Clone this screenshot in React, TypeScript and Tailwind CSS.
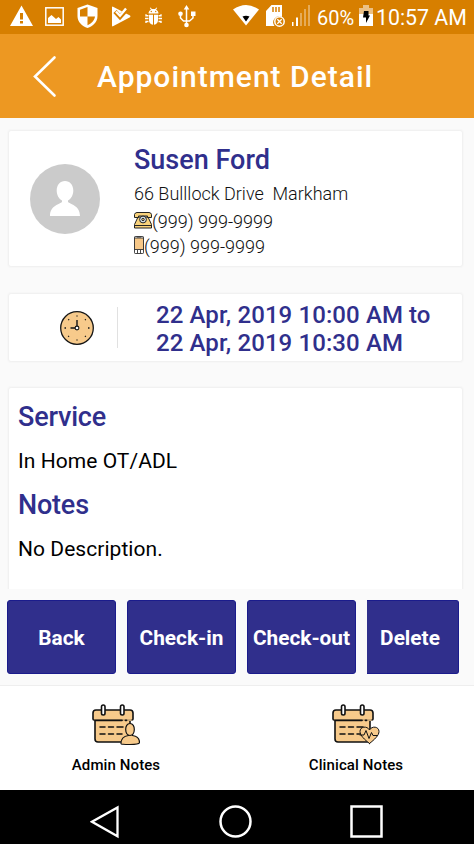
import React from "react";

function StatusBar() {
  return (
    <div className="flex h-[34px] shrink-0 items-center bg-[#d77f00] text-[20px] leading-[34px] text-white">
      <svg className="ml-[10px] shrink-0" width="23" height="34" viewBox="0 0 23 34">
        <path fill="#fff" fillRule="evenodd" d="M11.5 5.5 23 26H0ZM10 13v6.500h3v-6.500ZM10 21v2.500h3V21Z" />
      </svg>
      <svg className="ml-[12px] shrink-0" width="19" height="34" viewBox="0 0 19 34">
        <rect x="0.8" y="7.8" width="17.4" height="17.4" fill="none" stroke="#fff" strokeWidth="1.5" />
        <path fill="#fff" d="M3 23v-5l3.500-3 4.500 4 2.500-2 2.500 2.500V23Z" />
      </svg>
      <svg className="ml-[13px] shrink-0" width="21" height="34" viewBox="0 0 21 34">
        <path fill="#fff" d="M10.500 4.500 20.500 8v8c0 6-4.500 10-10 12C5 26 .5 22 .5 16V8Z" />
        <path fill="#d77f00" d="M10.500 7v9.500H3V9.800ZM10.500 16.500H18c-.5 4-3.500 7-7.500 8.700Z" />
      </svg>
      <svg className="ml-[13px] shrink-0" width="20" height="34" viewBox="0 0 20 34">
        <path fill="#fff" d="M1.500 6.500 19 15.500q1 .8 0 1.700L1.500 26.500Q1 26 1 25.500V7Z" />
        <path d="M4 11.500 9 17 17.500 7.500" fill="none" stroke="#d77f00" strokeWidth="4.500" />
        <path d="M5 11.500 9 15.800 15 8.500" fill="none" stroke="#fff" strokeWidth="2.400" />
      </svg>
      <svg className="ml-[14px] shrink-0" width="17" height="34" viewBox="0 0 17 34">
        <path fill="#fff" d="M3.500 13.500c0-2 1.300-3.300 2.500-4L4.800 8l.7-.5L6.900 9h3.200l1.400-1.500.7.5L11 9.500c1.200.7 2.500 2 2.500 4ZM4 14.800h4v10c-2.500-.3-4-2-4-4.500ZM9 14.800h4v5.500c0 2.500-1.500 4.200-4 4.500Z" />
        <circle cx="6.300" cy="11.500" r=".7" fill="#d77f00" /><circle cx="10.700" cy="11.500" r=".7" fill="#d77f00" />
        <path stroke="#fff" strokeWidth="1.400" fill="none" d="M3.500 18.500H0M3.500 15.800H1v-1.500M3.500 21.500H1V23M13.500 18.500H17M13.500 15.800H16v-1.500M13.500 21.500H16V23" />
      </svg>
      <svg className="ml-[16px] shrink-0" width="18" height="34" viewBox="0 0 18 34">
        <path stroke="#fff" strokeWidth="1.500" fill="none" d="M8.500 8v17M8.500 21H5.500l-3-3v-3.500M8.500 21h3l3.500-3v-3" />
        <path fill="#fff" d="m8.500 5 2.800 4.500H5.700ZM13 11.500h4.500v4.500H13Z" />
        <circle cx="2.500" cy="13.700" r="2.300" fill="#fff" /><circle cx="8.500" cy="25" r="2.300" fill="#fff" />
      </svg>
      <svg className="ml-[37px] shrink-0" width="26" height="34" viewBox="0 0 26 34">
        <path fill="#fff" d="M0 9.500Q13 .5 26 9.500L13 25.500Z" />
        <path fill="#000" d="M9.500 16.500q3.500-1.500 7 0L13 21.500Z" />
      </svg>
      <svg className="ml-[7px] shrink-0" width="20" height="34" viewBox="0 0 20 34">
        <path fill="#fff" d="M5.500 5H16v12a6 6 0 0 0-7.500 9H0V11Z" />
        <path stroke="#d77f00" strokeWidth="1.500" d="M7 7v5M10 7v5M13 7v5" />
        <circle cx="13.500" cy="21.500" r="4.700" fill="#d77f00" stroke="#fff" strokeWidth="1.500" />
        <path stroke="#fff" strokeWidth="1.300" d="m11.300 19.300 4.400 4.400m0-4.400-4.400 4.400" />
      </svg>
      <svg className="ml-[6px] shrink-0" width="19" height="34" viewBox="0 0 19 34">
        <path fill="#fff" d="M0 22h1.500v4H0ZM4 17.500h2V26H4Z" />
        <path fill="#fff" opacity=".35" d="M8 13h2v13H8ZM12 9h2v17h-2ZM16 5h2v21h-2Z" />
      </svg>
      <span className="ml-[6px] w-[42px] shrink-0 whitespace-nowrap pt-px text-[20px]">60%</span>
      <svg className="shrink-0" width="14" height="34" viewBox="0 0 14 34">
        <path fill="#ebc085" d="M4 5h6v3h4v6H0V8h4Z" />
        <path fill="#fff" d="M0 14h14v12H0Z" />
        <path fill="#000" d="M5 11h4.500v4.500H11l-4 7.500v-5.500H4Z" />
      </svg>
      <span className="ml-[3px] whitespace-nowrap pt-px text-[21.300px]">10:57 AM</span>
    </div>
  );
}

function Calendar({ kind }: { kind: "person" | "heart" }) {
  return (
    <svg width="48" height="42" viewBox="0 0 48 42" fill="#f7ca8b" stroke="#111" strokeWidth="1.600" strokeLinejoin="round" strokeLinecap="round">
      <path d="M3 15v20q0 3 3 3h29q3 0 3-3V15Z" />
      <path d="M4 6h34q3 0 3 3v6q0 1-1 1H2q-1 0-1-1V9q0-3 3-3Z" />
      <path d="M3 16h36" stroke="#f7ca8b" />
      <path d="M3 16.300h27M33.500 16.300h1" strokeWidth="1.800" />
      <rect x="9.500" y="1" width="3.500" height="10" rx="1.700" fill="#fff" />
      <rect x="28.500" y="1" width="3.500" height="10" rx="1.700" fill="#fff" />
      <path d="M8 23h5m3.500 0h5m3.500 0h6M8 30h5m3.500 0h5m3.500 0h5" fill="none" strokeWidth="1.500" />
      {kind === "person" ? (
        <g strokeWidth="1.200">
          <path d="M29 39.500c0-6 4-7.500 7.500-8v-2h4v2c3.500.5 7 2 7 7q0 2-9.500 2t-9-1Z" />
          <path d="M38 19.500c6 0 5.500 12 0 12s-6-12 0-12Z" />
        </g>
      ) : (
        <g strokeWidth="1">
          <path d="M37.500 39.500c-5-4-9.500-8-9.500-12 0-5 7-6 9.500-1.500 2.500-4.500 9.500-3.500 9.500 1.500 0 4-4.500 8-9.500 12Z" />
          <path d="M28 31h4l2-4.500 3 8 2.500-6 1.500 3h4" fill="none" />
        </g>
      )}
    </svg>
  );
}

const buttonClass =
  "flex h-[74px] items-center justify-center rounded-[3px] border border-[#1b1c8c] bg-[#302f8c] pt-[2px] text-[20.800px] font-bold leading-none text-white";
const cardClass = "mx-[9px] w-[453px] shrink-0 bg-white shadow-[0_0_2px_1px_#eeeeee]";

export default function App() {
  return (
    <div className="flex h-[844px] w-[474px] flex-col overflow-hidden bg-[#fafafa] font-['Roboto',sans-serif] text-[#111]">
      <StatusBar />
      <header className="flex h-[84px] shrink-0 items-center bg-[#ed9822] text-white">
        <svg className="ml-[32px]" width="26" height="84" viewBox="0 0 26 84">
          <path d="M22.500 23.500 3 42.500l19.500 19" fill="none" stroke="#fff" strokeWidth="2.600" strokeLinecap="round" />
        </svg>
        <h1 className="ml-[39px] whitespace-nowrap pt-[2px] text-[30px] font-medium leading-[82px] tracking-[1px]">Appointment Detail</h1>
      </header>

      <main className="flex h-[471px] shrink-0 flex-col overflow-hidden pt-[13px]">
        <section className={cardClass + " flex h-[135px] rounded-[2px]"}>
          <svg className="ml-[21px] mt-[33px]" width="70" height="70" viewBox="0 0 70 70">
            <circle cx="35" cy="35" r="35" fill="#cbcbcb" />
            <path fill="#fff" d="M35 17c5 0 8.300 4 8.300 9.500 0 4.500-2.300 8.500-5.300 10v1.500c1.500 2 12 3 12 14H20c0-11 10.500-12 12-14v-1.500c-3-1.500-5.300-5.500-5.300-10C26.700 21 30 17 35 17Z" />
          </svg>
          <div className="ml-[34px] mt-[13px] flex flex-col whitespace-nowrap text-[18px] font-light">
            <h2 className="h-[32px] text-[27px] font-medium leading-[32px] text-[#302f8c]">Susen Ford</h2>
            <p className="mt-[6px] h-[24px] whitespace-pre leading-[24px]">66 Bulllock Drive  Markham</p>
            <div className="mt-[4px] flex h-[24px] leading-[24px]">
              <svg className="mt-[2px]" width="18" height="17" viewBox="0 0 18 17" stroke="#222" strokeWidth="1" fill="#f8d27c">
                <path d="M4 5h10l3.500 7.500v3.500H.5v-3.500Z" />
                <path d="M.5 2.500Q1 .5 3 .5h12q2 0 2.500 2V5.500h-4V4h-9v1.500h-4Z" />
                <path d="M1 13.500h16" />
                <circle cx="9" cy="7.500" r="3.400" fill="#d6e1e8" /><circle cx="9" cy="7.500" r="1.200" />
              </svg>
              <span>(999) 999-9999</span>
            </div>
            <div className="mt-[1px] flex h-[24px] leading-[24px]">
              <svg className="mt-[1px]" width="10" height="18" viewBox="0 0 10 18" fill="#fff" stroke="#333" strokeWidth=".9">
                <rect x=".5" y=".5" width="9" height="17" rx=".7" />
                <rect x=".5" y="2" width="9" height="11.500" fill="#f7c888" />
                <path d="M3 1h4M3.500 14v3.500M6.500 14v3.500" />
              </svg>
              <span>(999) 999-9999</span>
            </div>
          </div>
        </section>

        <section className={cardClass + " mt-[28px] flex h-[67px] rounded-[2px]"}>
          <svg className="ml-[51px] mt-[17px]" width="34" height="34" viewBox="0 0 34 34">
            <circle cx="17" cy="17" r="16.300" fill="#f7ca8b" stroke="#151515" strokeWidth="1.300" />
            <path d="M17 4.500v1M17 28.500v1M4.500 17h1.500M28 17h1.500M8.300 8.300l.8.800M25 25l.8.800M25.800 8.300l-.8.800M9 25l-.8.800" stroke="#151515" strokeWidth="1.300" />
            <path d="M17 9v8h-6.500" fill="none" stroke="#151515" strokeWidth="1.400" />
            <circle cx="17" cy="17" r="1.900" fill="#fff" stroke="#151515" strokeWidth="1.100" />
          </svg>
          <div className="ml-[23px] mt-[13px] h-[41px] w-px bg-[#e1e1e1]" />
          <p className="ml-[38px] mt-[7px] whitespace-nowrap text-[24px] font-medium leading-[28px] tracking-[0.100px] text-[#302f8c]">
            22 Apr, 2019 10:00 AM to<br />22 Apr, 2019 10:30 AM
          </p>
        </section>

        <section className={cardClass + " mt-[27px] h-[240px] rounded-[2px] pl-[9px] pt-[13px] text-[21px] leading-[32px] text-black"}>
          <h2 className="text-[27px] font-medium tracking-[-0.200px] text-[#302f8c]">Service</h2>
          <p className="mt-[12px] tracking-[0.050px]">In Home OT/ADL</p>
          <h2 className="mt-[12px] text-[27px] font-medium tracking-[-0.200px] text-[#302f8c]">Notes</h2>
          <p className="mt-[12px] tracking-[0.050px]">No Description.</p>
        </section>
      </main>

      <div className="flex h-[96px] shrink-0 gap-[11px] pl-[7px] pt-[11px]">
        <button className={buttonClass + " w-[109px]"}>Back</button>
        <button className={buttonClass + " w-[109px]"}>Check-in</button>
        <button className={buttonClass + " w-[109px]"}><span className="whitespace-nowrap">Check-out</span></button>
        <button className={buttonClass + " w-[92px] rounded-l-none border-l-0 pr-[5px]"}>Delete</button>
      </div>

      <nav className="flex h-[105px] shrink-0 border-t border-[#eeeeee] bg-white text-[15px] font-medium leading-[20px] tracking-[0.100px] text-black">
        <div className="flex w-[232px] flex-col items-center pt-[18px]">
          <Calendar kind="person" />
          <span className="mt-[9px]">Admin Notes</span>
        </div>
        <div className="flex w-[242px] flex-col items-center pl-[6px] pt-[18px]">
          <Calendar kind="heart" />
          <span className="mt-[9px]">Clinical Notes</span>
        </div>
      </nav>

      <div className="flex h-[54px] shrink-0 items-start bg-black pt-[15px]">
        <svg className="ml-[90px]" width="30" height="34" viewBox="0 0 30 34" fill="none" stroke="#fff" strokeWidth="2.300"><path d="M27.500 2.500v28.800L2 16.700Z" /></svg>
        <svg className="ml-[98px]" width="34" height="34" viewBox="0 0 34 34" fill="none" stroke="#fff" strokeWidth="2.500"><circle cx="17.500" cy="16.500" r="15" /></svg>
        <svg className="ml-[98px]" width="34" height="34" viewBox="0 0 34 34" fill="none" stroke="#fff" strokeWidth="2.500"><rect x="1.500" y="1.500" width="30" height="30" /></svg>
      </div>
    </div>
  );
}
